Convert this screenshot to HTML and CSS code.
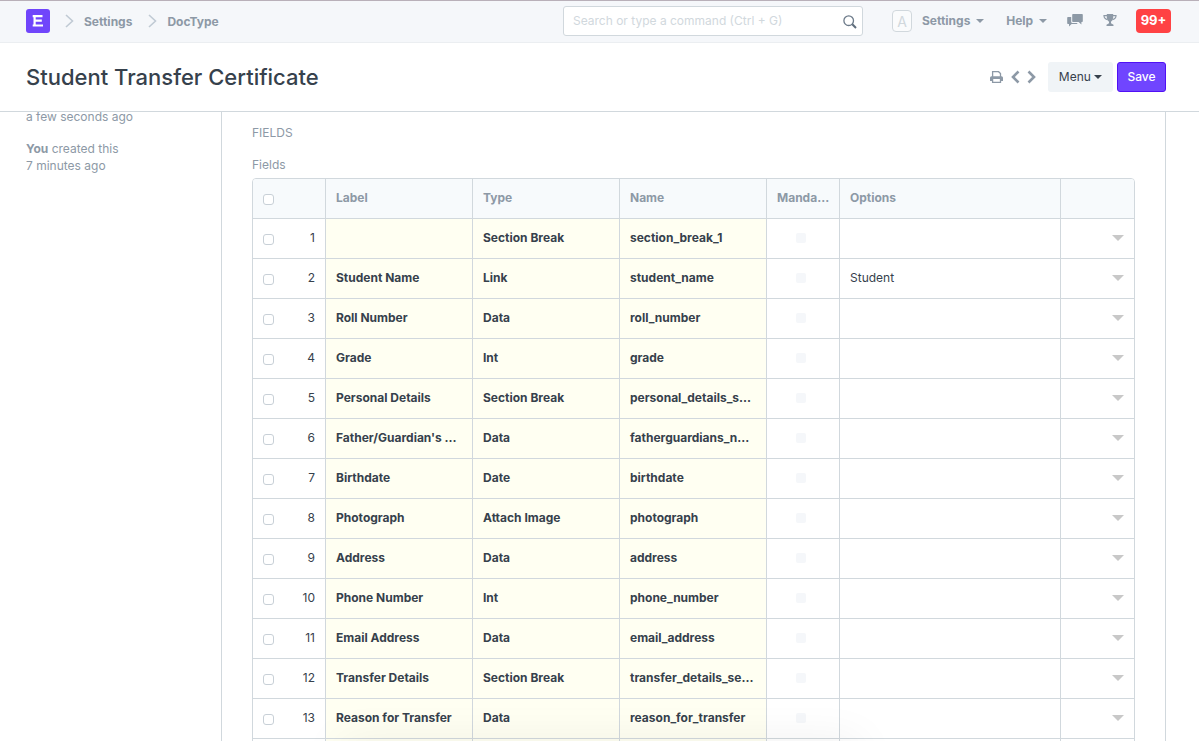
FILE: index.html
```html
<!DOCTYPE html>
<html lang="en">
<head>
<meta charset="utf-8">
<title>Student Transfer Certificate</title>
<link rel="stylesheet" href="styles.css">
</head>
<body>
<header class="navbar">
  <nav class="crumbs" aria-label="Breadcrumb">
    <a class="logo" href="#" aria-label="Home"><svg width="24" height="24" viewBox="0 0 24 24"><rect width="24" height="24" rx="3" fill="#7045fb"/><path d="M6.700 7.200H16.500M8 11.700H15.800M6.700 16.500H17M8.600 6.200v11.300" fill="none" stroke="#fff" stroke-width="2.200"/></svg></a>
    <svg class="chevron" width="9" height="14" viewBox="0 0 9 14"><path d="M1 1l6.500 6L1 13" fill="none" stroke="#c0cad4" stroke-width="1.600"/></svg>
    <a href="#">Settings</a>
    <svg class="chevron" width="9" height="14" viewBox="0 0 9 14"><path d="M1 1l6.500 6L1 13" fill="none" stroke="#c0cad4" stroke-width="1.600"/></svg>
    <a href="#">DocType</a>
  </nav>
  <div class="tools">
    <div class="search">
      <input type="text" aria-label="Search" placeholder="Search or type a command (Ctrl + G)">
      <svg width="14" height="14" viewBox="0 0 14 14"><circle cx="5.700" cy="5.700" r="4.800" fill="none" stroke="#6c7a89" stroke-width="1.300"/><path d="M9.300 9.300l3.700 3.700" stroke="#5f6d7c" stroke-width="2"/></svg>
    </div>
    <span class="avatar">A</span>
    <button class="navlink settings" type="button">Settings <i class="caret"></i></button>
    <button class="navlink help" type="button">Help <i class="caret"></i></button>
    <button class="icon chat" type="button" aria-label="Chat"><svg width="16" height="14" viewBox="0 0 16 14" fill="#8d99a6"><path d="M6 0h9q.8 0 .8.800v6.400q0 .8-.8.800h-.6v2.600L11.600 8H6q-.8 0-.8-.8V.8Q5.200 0 6 0z"/><path d="M4.200 3H1Q.2 3 .2 3.800v5.400q0 .8.800.8h1v2.500L4.600 10h5q.8 0 .8-.8V9H5.500q-1.300 0-1.300-1.300z"/></svg></button>
    <button class="icon cup" type="button" aria-label="Achievements"><svg width="14" height="14" viewBox="0 0 14 14"><path d="M3.800 0h6.400v3.500q0 3-2.200 4.200v1.500l2.500 1.500V12h-7v-1.300L6 9.200V7.700Q3.800 6.500 3.800 3.500z" fill="#8d99a6"/><path d="M4 1.700H1q0 3 3.400 3.900M10 1.700h3q0 3-3.400 3.900" fill="none" stroke="#8d99a6" stroke-width="1.200"/></svg></button>
    <button class="count" type="button">99+</button>
  </div>
</header>
<div class="page-head">
  <h1>Student Transfer Certificate</h1>
  <div class="actions">
    <button class="icon" type="button" aria-label="Print"><svg width="13" height="12" viewBox="0 0 13 12"><path d="M2.600 6V.7h6l1.900 1.900V6" fill="none" stroke="#8d99a6" stroke-width="1.300"/><path d="M1.500 5.200h10Q13 5.200 13 6.700V10h-2V8H2v2H0V6.700Q0 5.200 1.500 5.200z" fill="#8d99a6"/><path d="M2.600 8v3.300h7.900V8" fill="none" stroke="#8d99a6" stroke-width="1.300"/></svg></button>
    <button class="icon prev" type="button" aria-label="Previous"><svg width="9" height="14" viewBox="0 0 9 14"><path d="M7.500 1.500L2 7l5.500 5.500" fill="none" stroke="#8d99a6" stroke-width="2.600"/></svg></button>
    <button class="icon next" type="button" aria-label="Next"><svg width="9" height="14" viewBox="0 0 9 14"><path d="M1.500 1.500L7 7l-5.500 5.500" fill="none" stroke="#8d99a6" stroke-width="2.600"/></svg></button>
    <button class="btn menu" type="button">Menu <i class="caret"></i></button>
    <button class="btn save" type="button">Save</button>
  </div>
</div>
<div class="body">
  <aside>
    <p>a few seconds ago</p>
    <p><b>You</b> created this<br>7 minutes ago</p>
  </aside>
  <main>
    <h2>FIELDS</h2>
    <div class="caption" id="fields-caption">Fields</div>
    <table aria-labelledby="fields-caption">
      <colgroup><col class="c-idx"><col class="c-text"><col class="c-text"><col class="c-text"><col class="c-small"><col><col class="c-small"></colgroup>
      <thead><tr><th><input type="checkbox" aria-label="Select all"></th><th>Label</th><th>Type</th><th>Name</th><th>Manda...</th><th>Options</th><th></th></tr></thead>
      <tbody id="rows"></tbody>
    </table>
  </main>
</div>
<script src="rows.js"></script>
</body>
</html>
```
FILE: styles.css
```css
* { box-sizing: border-box; }
body { margin: 0; height: 100vh; overflow: hidden; display: flex; flex-direction: column; font: 12px/17px Inter, "Liberation Sans", sans-serif; color: #36414c; background: #fff; }
button { font: inherit; color: inherit; border: 0; background: none; padding: 0; cursor: pointer; }
a { color: inherit; text-decoration: none; }
svg { display: block; }
p, h1, h2 { margin: 0; }

.navbar { flex: none; height: 43px; padding: 0 28px 2px 26px; display: flex; align-items: center; justify-content: space-between; background: #f5f7fa; border-top: 1px solid #b9b0b9; border-bottom: 1px solid #ebeef1; color: #8d99a6; font-weight: 700; }
.crumbs { display: flex; align-items: center; }
.logo { margin-right: 15px; }
.chevron { margin-right: 10px; }
.crumbs a:not(.logo) { margin-right: 16px; padding-top: 1px; }
.tools { display: flex; align-items: center; }
.search { position: relative; width: 300px; margin-right: 29px; }
.search input { display: block; width: 100%; height: 30px; padding: 0 30px 0 9px; font: inherit; font-weight: 400; color: #36414c; background: #fff; border: 1px solid #d1d8dd; border-radius: 3px; }
.search input::placeholder { color: #d1d8dd; opacity: 1; }
.search svg { position: absolute; right: 6px; top: 9px; }
.avatar { width: 20px; height: 22px; margin-right: 10px; border: 1px solid #d1d8dd; border-radius: 4px; text-align: center; font-size: 14px; line-height: 21px; font-weight: 400; color: #d1d8dd; background: #fafbfc; }
.caret { display: inline-block; margin-left: 3px; vertical-align: 2px; border: 4px solid transparent; border-top-color: currentColor; border-bottom: 0; }
.help, .chat { margin-right: 20px; }
.settings { margin-right: 22px; }
.cup { margin-right: 19px; }
.count { width: 35px; height: 24px; border-radius: 4px; background: #ff4244; color: #fff; font-size: 13px; }

.page-head { flex: none; height: 69px; padding: 0 33px 0 26px; display: flex; align-items: center; justify-content: space-between; border-bottom: 1px solid #d1d8dd; }
h1 { font-size: 22px; line-height: 32px; font-weight: 500; }
.actions { display: flex; align-items: center; }
.prev { margin-left: 8px; }
.next { margin: 0 12px 0 7px; }
.btn { height: 30px; padding-bottom: 2px; border-radius: 3px; }
.menu { width: 65px; background: #f0f4f7; margin-right: 4px; }
.menu .caret { margin-left: 0; }
.save { width: 49px; background: #7045ff; border: 1px solid #5110f5; color: #fff; font-weight: 500; }

.body { flex: 1; min-height: 0; overflow: hidden; display: flex; padding-right: 33px; color: #8d99a6; }
aside { width: 221px; flex: none; padding: 0 26px; }
aside p { margin-top: -4px; }
aside p + p { margin-top: 15px; }
main { flex: 1; min-width: 0; padding: 12px 30px 0; border: 1px solid #d1d8dd; border-width: 0 1px; }
h2 { font-size: 12px; line-height: 17px; font-weight: 400; }
.caption { margin: 15px 0 5px; }
table { width: 100%; table-layout: fixed; border-collapse: separate; border-spacing: 0; border: 1px solid #d1d8dd; border-radius: 4px; }
.c-idx, .c-small { width: 73px; }
.c-text { width: 147px; }
th, td { height: 40px; padding: 0 10px 2px; border-right: 1px solid #d1d8dd; border-bottom: 1px solid #d1d8dd; text-align: left; white-space: nowrap; vertical-align: middle; }
th:last-child, td:last-child { border-right: 0; text-align: right; }
th { background: #f7fafc; font-weight: 700; }
th:first-child { border-top-left-radius: 3px; }
th:last-child { border-top-right-radius: 3px; }
td { color: #36414c; }
.req { background: #fffff2; font-weight: 700; }
.pick { display: flex; align-items: center; justify-content: space-between; }
input[type=checkbox] { appearance: none; display: block; width: 11px; height: 11px; margin: 3px 0 0; border: 1px solid #c8d0d7; border-radius: 3px; background: #fff; }
.mand { padding: 0 5px 2px 0; }
.mand input[type=checkbox] { margin: 0 auto; width: 10px; height: 10px; border: 0; border-radius: 2px; background: #f5f7fa; }
.open { display: block; margin-left: auto; border: 6px solid transparent; border-top-color: #c8c8c8; border-bottom: 0; }

/* shade cast by the bar docked under the window */
body::after { content: ""; position: fixed; left: 340px; right: 340px; bottom: -24px; height: 20px; box-shadow: 0 0 44px rgba(0, 0, 0, .1); pointer-events: none; }
```
FILE: rows.js
```js
const fields = [
  ["", "Section Break", "section_break_1", ""],
  ["Student Name", "Link", "student_name", "Student"],
  ["Roll Number", "Data", "roll_number", ""],
  ["Grade", "Int", "grade", ""],
  ["Personal Details", "Section Break", "personal_details_s...", ""],
  ["Father/Guardian's ...", "Data", "fatherguardians_n...", ""],
  ["Birthdate", "Date", "birthdate", ""],
  ["Photograph", "Attach Image", "photograph", ""],
  ["Address", "Data", "address", ""],
  ["Phone Number", "Int", "phone_number", ""],
  ["Email Address", "Data", "email_address", ""],
  ["Transfer Details", "Section Break", "transfer_details_se...", ""],
  ["Reason for Transfer", "Data", "reason_for_transfer", ""],
  ["", "", "", ""]
];
document.getElementById("rows").innerHTML = fields.map(([label, type, name, options], i) => `
  <tr>
    <td><label class="pick"><input type="checkbox">${i + 1}</label></td>
    <td class="req">${label}</td><td class="req">${type}</td><td class="req">${name}</td>
    <td class="mand"><input type="checkbox" disabled aria-label="Mandatory"></td>
    <td>${options}</td>
    <td><button class="open" type="button" aria-label="Open row"></button></td>
  </tr>`).join("");
```
